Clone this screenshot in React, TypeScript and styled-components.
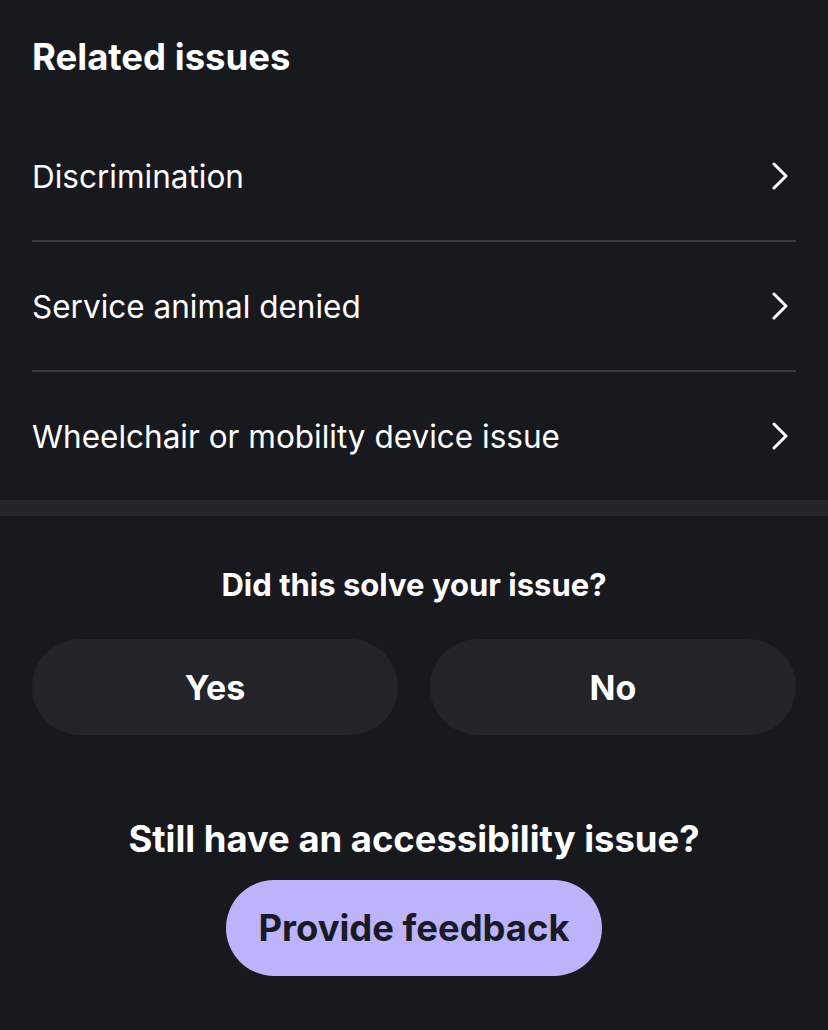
import React from "react";
import styled, { createGlobalStyle } from "styled-components";

const GlobalStyle = createGlobalStyle`
  html, body {
    margin: 0;
    padding: 0;
    background: #18181f;
  }
  body {
    font-family: "Inter", "Liberation Sans", sans-serif;
    color: #ffffff;
    -webkit-font-smoothing: antialiased;
  }
  * { box-sizing: border-box; }
`;

const Page = styled.main`
  width: 828px;
  min-height: 1030px;
  background: #18181f;
  display: flex;
  flex-direction: column;
`;

const RelatedSection = styled.section`
  padding: 35px 32px 0;
  display: flex;
  flex-direction: column;
`;

const SectionTitle = styled.h2`
  margin: 0 0 33px;
  font-size: 36.5px;
  line-height: 44px;
  font-weight: 700;
`;

const IssueList = styled.ul`
  list-style: none;
  margin: 0;
  padding: 0;
`;

const IssueRow = styled.li`
  height: 130px;
  display: flex;
  align-items: center;
  justify-content: space-between;
  border-bottom: 2px solid #3a3a42;
  cursor: pointer;

  &:last-child {
    height: 128px;
    border-bottom: none;
  }
`;

const IssueLabel = styled.span`
  font-size: 31.5px;
  font-weight: 400;
  color: #ffffff;
`;

const ChevronIcon = styled.svg`
  width: 16px;
  height: 28px;
  margin-right: 8px;
  flex-shrink: 0;
`;

const Band = styled.div`
  height: 16px;
  background: #24242b;
`;

const FeedbackSection = styled.section`
  padding: 50px 32px 0;
  display: flex;
  flex-direction: column;
  align-items: center;
`;

const Question = styled.h3`
  margin: 0;
  font-size: 31px;
  line-height: 38px;
  font-weight: 700;
  text-align: center;
`;

const AnswerRow = styled.div`
  margin-top: 35px;
  width: 100%;
  display: grid;
  grid-template-columns: 1fr 1fr;
  gap: 32px;
`;

const AnswerButton = styled.button`
  height: 96px;
  border: none;
  border-radius: 48px;
  background: #23232a;
  color: #ffffff;
  font-family: inherit;
  font-size: 34px;
  font-weight: 700;
  cursor: pointer;
`;

const StillHeading = styled.h3`
  margin: 82px 0 0;
  font-size: 36.4px;
  line-height: 44px;
  font-weight: 700;
  text-align: center;
`;

const PrimaryButton = styled.button`
  margin-top: 19px;
  height: 96px;
  padding: 0 32px;
  border: none;
  border-radius: 48px;
  background: #bdb3fb;
  color: #1a1926;
  font-family: inherit;
  font-size: 36.4px;
  font-weight: 700;
  cursor: pointer;
`;

const Chevron = () => (
  <ChevronIcon viewBox="0 0 16 28" fill="none" aria-hidden="true">
    <polyline
      points="2,2 14,14 2,26"
      stroke="#ffffff"
      strokeWidth="3"
      strokeLinecap="round"
      strokeLinejoin="round"
    />
  </ChevronIcon>
);

const issues = [
  "Discrimination",
  "Service animal denied",
  "Wheelchair or mobility device issue",
];

export default function App() {
  return (
    <>
      <GlobalStyle />
      <Page>
        <RelatedSection>
          <SectionTitle>Related issues</SectionTitle>
          <IssueList>
            {issues.map((issue) => (
              <IssueRow key={issue}>
                <IssueLabel>{issue}</IssueLabel>
                <Chevron />
              </IssueRow>
            ))}
          </IssueList>
        </RelatedSection>
        <Band />
        <FeedbackSection>
          <Question>Did this solve your issue?</Question>
          <AnswerRow>
            <AnswerButton>Yes</AnswerButton>
            <AnswerButton>No</AnswerButton>
          </AnswerRow>
          <StillHeading>Still have an accessibility issue?</StillHeading>
          <PrimaryButton>Provide feedback</PrimaryButton>
        </FeedbackSection>
      </Page>
    </>
  );
}
